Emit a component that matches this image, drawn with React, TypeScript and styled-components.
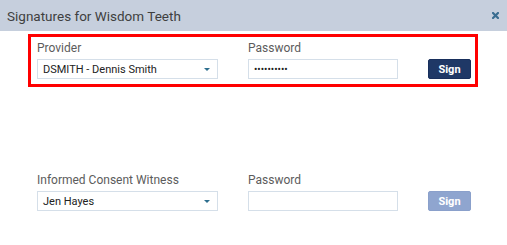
import React from 'react';
import styled, { createGlobalStyle } from 'styled-components';

const GlobalStyle = createGlobalStyle`
    html, body {
        margin: 0;
        padding: 0;
        background: #ffffff;
        font-family: Roboto, "Liberation Sans", Arial, sans-serif;
    }
`

const Modal = styled.div`
    width: 507px;
    height: 245px;
    background: #ffffff;
    overflow: hidden;
`

const Header = styled.div`
    height: 31px;
    box-sizing: border-box;
    background: #c6cfdd;
    display: flex;
    align-items: center;
    justify-content: space-between;
    padding: 0 8px 0 7px;
`

const Title = styled.div`
    font-size: 13.5px;
    color: #3f3f3f;
`

const CloseButton = styled.button`
    border: none;
    background: none;
    padding: 0;
    width: 7px;
    height: 7px;
    display: grid;
    place-items: center;
    cursor: pointer;
`

const Body = styled.div`
    padding: 3px 29px 0 28px;
    display: flex;
    flex-direction: column;
    gap: 79px;
`

type SectionProps = { $highlighted?: boolean };
const Section = styled.div<SectionProps>`
    border: 3px solid ${props => props.$highlighted ? '#ff0000' : 'transparent'};
    padding: 4px 4px 5px 6px;
    display: flex;
    align-items: flex-end;
    gap: 30px;
`

type FieldProps = { $width: number };
const Field = styled.div<FieldProps>`
    width: ${props => props.$width}px;
    display: flex;
    flex-direction: column;
`

const Label = styled.label`
    font-size: 12px;
    line-height: 15px;
    color: #5c5c5c;
    margin-bottom: 3px;
`

const SelectBox = styled.div`
    height: 20px;
    box-sizing: border-box;
    border: 1px solid #d5dfe9;
    background: #ffffff;
    display: flex;
    align-items: center;
    justify-content: space-between;
    padding: 0 7px 0 5px;
    font-size: 11px;
    color: #222222;
`

const Caret = styled.span`
    width: 0;
    height: 0;
    border-left: 3px solid transparent;
    border-right: 3px solid transparent;
    border-top: 3px solid #2d6e8e;
`

const PasswordInput = styled.input`
    height: 20px;
    width: 100%;
    box-sizing: border-box;
    border: 1px solid #d5dfe9;
    background: #ffffff;
    padding: 0 5px;
    font-family: Roboto, "Liberation Sans", Arial, sans-serif;
    font-size: 10px;
    color: #222222;
    outline: none;
`

type SignProps = { $disabled?: boolean };
const SignButton = styled.button<SignProps>`
    width: 43px;
    height: 20px;
    border: 1px solid ${props => props.$disabled ? '#8aa0cb' : '#182f5c'};
    border-radius: 2px;
    background: ${props => props.$disabled ? '#8fa5cf' : '#1f3866'};
    color: #ffffff;
    font-family: Roboto, "Liberation Sans", Arial, sans-serif;
    font-size: 11px;
    font-weight: bold;
    padding: 0;
    cursor: ${props => props.$disabled ? 'default' : 'pointer'};
`

type SignatureRowProps = {
    label: string;
    signer: string;
    password: string;
    highlighted?: boolean;
    disabled?: boolean;
}

function SignatureRow(props: SignatureRowProps) {
    return (
        <Section $highlighted={props.highlighted}>
            <Field $width={181}>
                <Label>{props.label}</Label>
                <SelectBox>
                    <span>{props.signer}</span>
                    <Caret />
                </SelectBox>
            </Field>
            <Field $width={150}>
                <Label>Password</Label>
                <PasswordInput type="password" value={props.password} readOnly />
            </Field>
            <SignButton $disabled={props.disabled}>Sign</SignButton>
        </Section>
    );
}

export default function App() {
    return (
        <>
            <GlobalStyle />
            <Modal>
                <Header>
                    <Title>Signatures for Wisdom Teeth</Title>
                    <CloseButton aria-label="close">
                        <svg width="7" height="7" viewBox="0 0 7 7">
                            <path d="M1 1 L6 6 M6 1 L1 6" stroke="#3a6d90" strokeWidth="2.2" strokeLinecap="square" />
                        </svg>
                    </CloseButton>
                </Header>
                <Body>
                    <SignatureRow label="Provider" signer="DSMITH - Dennis Smith" password="dsmith1234" highlighted />
                    <SignatureRow label="Informed Consent Witness" signer="Jen Hayes" password="" disabled />
                </Body>
            </Modal>
        </>
    );
}
